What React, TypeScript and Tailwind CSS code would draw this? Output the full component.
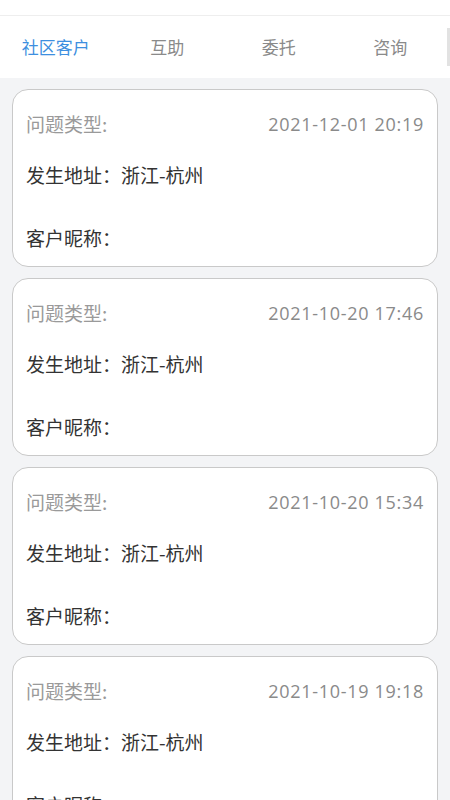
import React from "react";

const items = [
  { date: "2021-12-01 20:19" },
  { date: "2021-10-20 17:46" },
  { date: "2021-10-20 15:34" },
  { date: "2021-10-19 19:18" },
];

export default function App() {
  return (
    <div
      className="w-[450px] h-[800px] overflow-hidden bg-[#f3f4f6]"
      style={{ fontFamily: '"Noto Sans CJK SC", "Noto Sans", sans-serif' }}
    >
      <div className="h-[16px] bg-white border-b border-[#eeeeee]" />
      <div className="relative h-[62px] bg-white flex pr-[4px]">
        {["社区客户", "互助", "委托", "咨询"].map((t, i) => (
          <div
            key={t}
            className={`flex-1 flex items-center justify-center text-[17px] ${
              i === 0 ? "text-[#3d8fe0]" : "text-[#8a8a8a]"
            }`}
          >
            {t}
          </div>
        ))}
        <div className="absolute right-0 top-[12px] w-[3px] h-[38px] bg-[#e2e2e2]" />
      </div>
      <div className="flex flex-col gap-[11px] px-[12px] pt-[11px]">
        {items.map((it) => (
          <div
            key={it.date}
            className="h-[178px] shrink-0 bg-white rounded-[16px] border border-[#c9c9c9] px-[13px] pt-[22px]"
          >
            <div className="flex justify-between leading-[24px] text-[19px]">
              <span className="text-[#9a9a9a]">问题类型:</span>
              <span
                className="text-[#8a8a8a] text-[18px] tracking-[0.7px]"
                style={{ fontFamily: '"Open Sans", "Noto Sans", sans-serif' }}
              >
                {it.date}
              </span>
            </div>
            <div className="mt-[27px] leading-[24px] text-[19px] text-[#333333]">
              发生地址：浙江-杭州
            </div>
            <div className="mt-[39px] leading-[24px] text-[19px] text-[#333333]">
              客户昵称：
            </div>
          </div>
        ))}
      </div>
    </div>
  );
}
